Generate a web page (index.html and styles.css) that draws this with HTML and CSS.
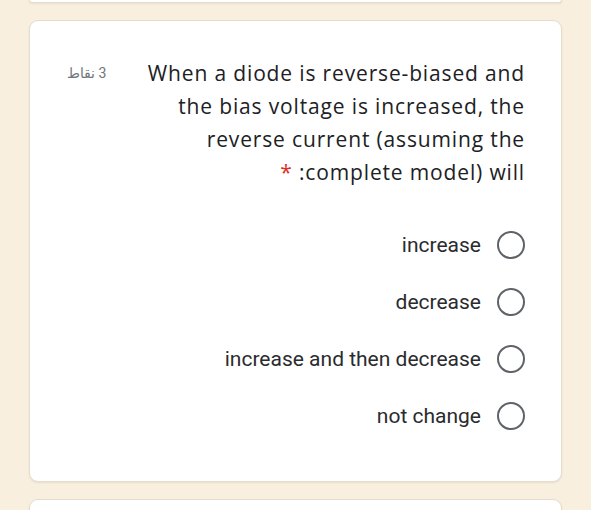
FILE: index.html
```html
<!DOCTYPE html>
<html lang="ar" dir="rtl">
<head>
<meta charset="utf-8">
<title>Quiz question</title>
<link rel="stylesheet" href="styles.css">
</head>
<body>
<div class="card card-prev"></div>
<div class="card card-main">
  <div class="title-row">
    <div class="question" dir="rtl">When a diode is reverse-biased and the bias voltage is increased, the reverse current (assuming the complete model) will: <span class="req">*</span></div>
    <div class="points">3 نقاط</div>
  </div>
  <div class="options">
    <label class="option"><span class="radio"></span><span class="opt-text">increase</span></label>
    <label class="option"><span class="radio"></span><span class="opt-text">decrease</span></label>
    <label class="option"><span class="radio"></span><span class="opt-text">increase and then decrease</span></label>
    <label class="option"><span class="radio"></span><span class="opt-text">not change</span></label>
  </div>
</div>
<div class="card card-next"></div>
</body>
</html>
```
FILE: styles.css
```css
html, body {
  margin: 0;
  padding: 0;
}
body {
  background: #f9efdf;
  width: 591px;
  height: 510px;
  overflow: hidden;
}
.card {
  background: #ffffff;
  margin: 0 29px;
  border: 1px solid #e4ddcd;
  border-radius: 9px;
  box-shadow: 0 1px 2px rgba(120, 100, 60, 0.12);
  box-sizing: border-box;
}
.card-prev {
  height: 3px;
  border-top: none;
  border-radius: 0 0 9px 9px;
  margin-bottom: 17px;
}
.card-main {
  height: 462px;
  padding: 36px 36px 0 37px;
  margin-bottom: 17px;
}
.card-next {
  height: 20px;
}
.title-row {
  display: flex;
  justify-content: space-between;
  align-items: flex-start;
}
.question {
  width: 396px;
  font-family: "Open Sans", sans-serif;
  font-size: 21px;
  letter-spacing: 0.85px;
  line-height: 33px;
  color: #202124;
  text-align: right;
}
.req {
  color: #d93025;
}
.points {
  font-family: "Roboto", "Noto Sans", sans-serif;
  font-size: 14px;
  color: #70757a;
  line-height: 33px;
  white-space: nowrap;
}
.options {
  margin-top: 27px;
  display: flex;
  flex-direction: column;
}
.option {
  height: 57px;
  display: flex;
  align-items: center;
  gap: 16px;
}
.radio {
  width: 28px;
  height: 28px;
  box-sizing: border-box;
  border: 2.5px solid #5f6368;
  border-radius: 50%;
  flex: none;
}
.opt-text {
  font-family: "Roboto", sans-serif;
  font-size: 21px;
  color: #2a2b2e;
}
```
